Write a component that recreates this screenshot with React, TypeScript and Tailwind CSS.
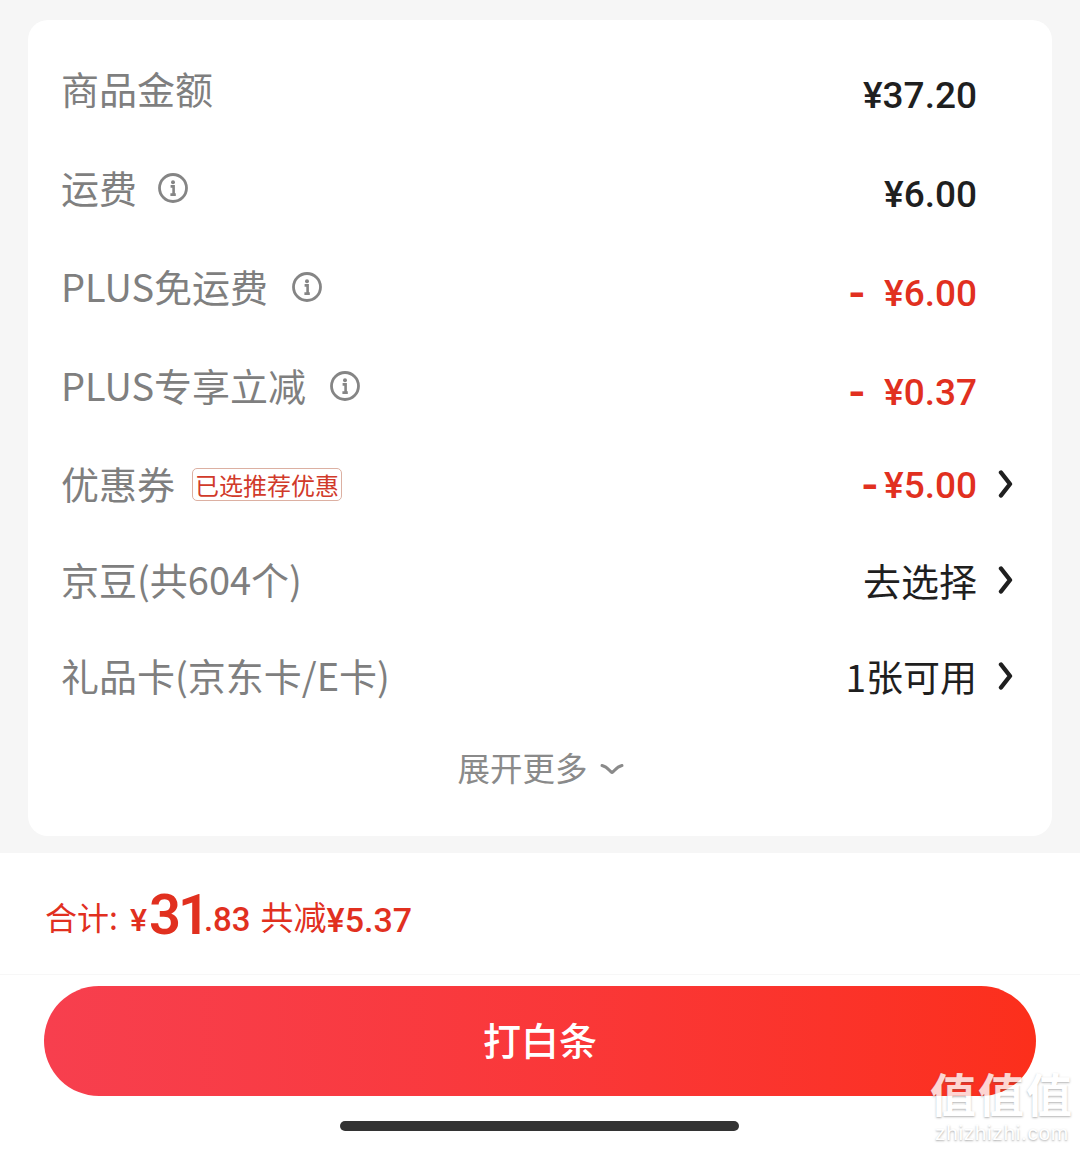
const cjk = "font-['Noto_Sans_CJK_SC','Noto_Sans',sans-serif]";

function Info() {
  return (
    <svg width="32" height="32" viewBox="0 0 32 32" fill="none" className="mt-[3px] shrink-0">
      <circle cx="16" cy="16" r="13.5" stroke="#858585" strokeWidth="2.8" />
      <circle cx="16" cy="10.2" r="2" fill="#858585" />
      <path d="M13.6 14.4h3v8M13.4 22.6h5.4" stroke="#858585" strokeWidth="2.6" />
    </svg>
  );
}

function Chevron() {
  return (
    <svg width="16" height="28" viewBox="0 0 16 28" fill="none">
      <path d="M3 2.5 12 14 3 25.5" stroke="#1f1f1f" strokeWidth="4.4" strokeLinecap="round" strokeLinejoin="round" />
    </svg>
  );
}

function Row({ label, info, gap, tag, value, dash, tone, chevron, height, labelPad, valueClass }: {
  label: string; info?: boolean; gap?: string; tag?: boolean; value: string; dash?: string; tone: string; chevron?: boolean;
  height: string; labelPad: string; valueClass: string;
}) {
  return (
    <div className={`flex items-center justify-between ${height}`}>
      <div className={`flex items-center ${gap ?? "gap-[23px]"} ${labelPad}`}>
        <span className={`text-[38px] leading-[48px] text-[#7f7f7f] ${cjk}`}>{label}</span>
        {info && <Info />}
        {tag && (
          <span className={`mt-[3px] rounded-[5px] border border-[#dcb0a2] px-[2px] text-[24px] leading-[31px] text-[#d13a2a] ${cjk}`}>已选推荐优惠</span>
        )}
      </div>
      <div className="flex items-center">
        <span className={`whitespace-pre leading-[48px] ${tone} ${valueClass}`}>
          {dash && <span className={`align-[-3px] font-medium leading-[0] ${dash}`}>-</span>}
          {value}
        </span>
        <span className="flex w-[37px] justify-end">{chevron && <Chevron />}</span>
      </div>
    </div>
  );
}

const num = "font-['Roboto',sans-serif] text-[37px] font-medium";

export default function App() {
  return (
    <div className="relative flex h-[1151px] w-[1080px] flex-col overflow-hidden bg-[#f6f6f6]">
      <div className="px-7 pt-5">
        <div className="flex h-[816px] flex-col rounded-[20px] bg-white pl-[33px] pr-[38px] pt-[26px]">
          <Row height="h-[99px]" labelPad="pb-[16px]" valueClass={num} label="商品金额" value="¥37.20" tone="text-[#1f1f1f]" />
          <Row height="h-[99px]" labelPad="pb-[16px]" valueClass={num} gap="gap-[20px]" label="运费" info value="¥6.00" tone="text-[#1f1f1f]" />
          <Row height="h-[99px]" labelPad="pb-[16px]" valueClass={num} label="PLUS免运费" info dash="mr-[19px] text-[48px]" value="¥6.00" tone="text-[#e1301f]" />
          <Row height="h-[99px]" labelPad="pb-[16px]" valueClass={num} label="PLUS专享立减" info dash="mr-[19px] text-[48px]" value="¥0.37" tone="text-[#e1301f]" />
          <div className="-mt-[6px]">
            <Row height="h-[96px]" labelPad="pb-[3px]" valueClass={`${num} mt-1`} label="优惠券" gap="gap-[17px]" tag chevron dash="mr-[6px] text-[48px]" value="¥5.00" tone="text-[#e1301f]" />
          </div>
          <Row height="h-[96px]" labelPad="pb-[3px]" valueClass={`text-[38px] ${cjk}`} label="京豆(共604个)" chevron value="去选择" tone="text-[#1f1f1f]" />
          <Row height="h-[96px]" labelPad="pb-[3px]" valueClass={`text-[37px] ${cjk}`} label="礼品卡(京东卡/E卡)" chevron value="1张可用" tone="text-[#1f1f1f]" />
          <div className={`flex h-[86px] items-center justify-center gap-[12px] pl-[6px] text-[32.500px] text-[#8a8a8a] ${cjk}`}>
            <span>展开更多</span>
            <svg width="24" height="12" viewBox="0 0 24 12" fill="none" className="mt-1">
              <path d="M2 2.500c6 1.200 8 6.500 10 7 2-.5 4-5.800 10-7" stroke="#8a8a8a" strokeWidth="3" strokeLinecap="round" />
            </svg>
          </div>
        </div>
      </div>

      <div className="mt-[17px] flex flex-1 flex-col bg-white">
        <div className="flex h-[122px] items-end border-b border-[#f7f7f7] pb-[35px] pl-[45px] text-[#e1301f]">
          <span className={`mb-[3px] text-[32px] leading-[40px] ${cjk}`}>合计:</span>
          <span className="ml-[12px] mr-[2px] font-['Roboto',sans-serif] text-[32px] font-medium leading-[38px]">¥</span>
          <span className="font-['Roboto',sans-serif] text-[56px] font-semibold leading-[48px] tracking-[-3px]">31</span>
          <span className="-ml-[3px] font-['Roboto',sans-serif] text-[33px] font-medium leading-[38px]">.83</span>
          <span className={`mb-[3px] ml-[10px] text-[33px] leading-[40px] ${cjk}`}>共减</span>
          <span className="font-['Roboto',sans-serif] text-[34px] font-medium leading-[38px]">¥5.37</span>
        </div>
        <div className="px-11 pt-[11px]">
          <div className={`flex h-[110px] items-center justify-center rounded-full bg-gradient-to-r from-[#f73f4e] to-[#fc2f1b] pb-[5px] text-[38px] font-medium text-white ${cjk}`}>
            打白条
          </div>
        </div>
        <div className="flex justify-center pr-[2px] pt-[25px]">
          <div className="h-[10px] w-[399px] rounded-full bg-[#333333]" />
        </div>
      </div>

      <div className="absolute left-[930px] top-[1066px] flex w-[144px] flex-col items-center text-white [text-shadow:0_1px_2px_rgba(90,90,90,0.55)]">
        <span className={`text-[46px] font-bold leading-[52px] tracking-[2px] opacity-80 ${cjk}`}>值值值</span>
        <span className="mt-[3px] font-['Liberation_Sans',sans-serif] text-[21px] leading-[24px] tracking-[0.6px] opacity-90">zhizhizhi.com</span>
      </div>
    </div>
  );
}
